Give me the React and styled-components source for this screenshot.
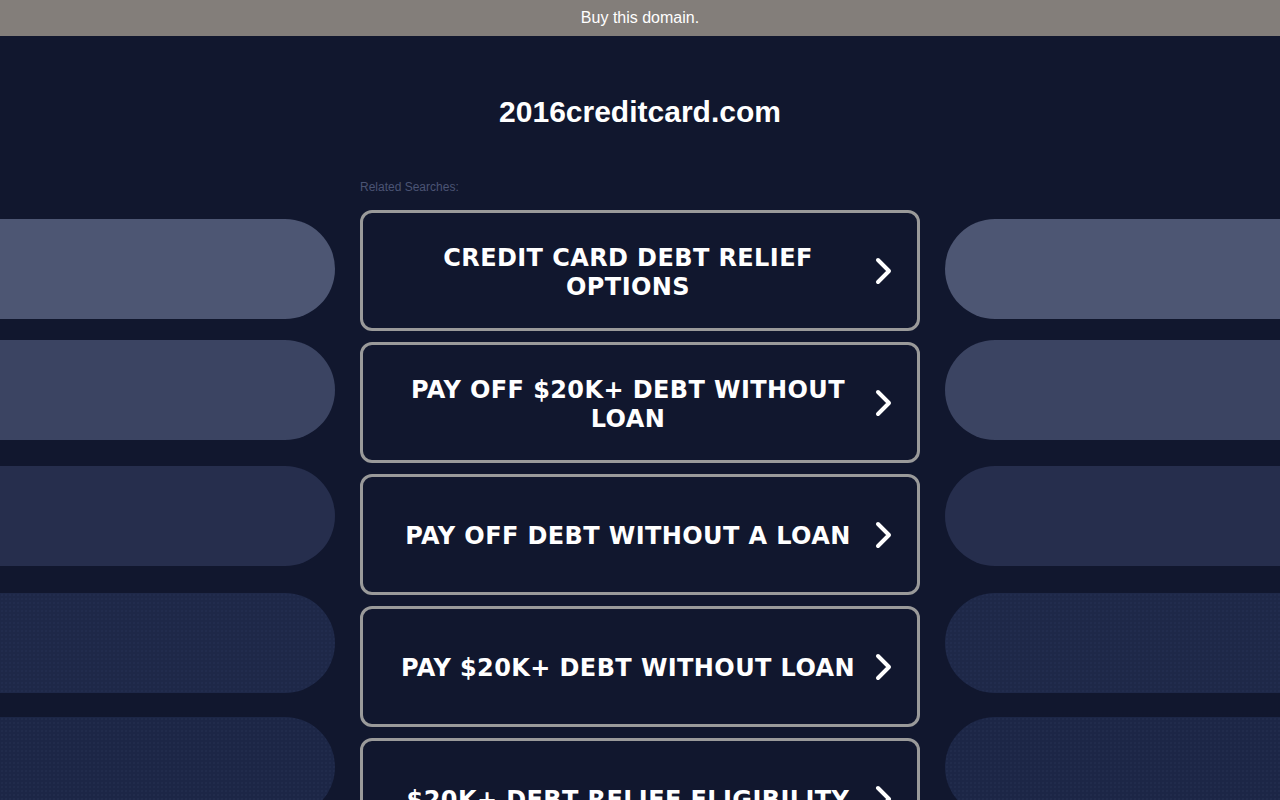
import React from 'react';
import styled, { createGlobalStyle } from 'styled-components';

const GlobalStyle = createGlobalStyle`
  html, body {
    margin: 0;
    padding: 0;
    height: 100%;
    overflow: hidden;
    background: #11172e;
  }
  body {
    font-family: "Liberation Sans", Arial, sans-serif;
  }
`;

const Page = styled.div`
  min-height: 100vh;
  background: #11172e;
`;

const TopBar = styled.div`
  height: 36px;
  background: #837e7a;
  color: #ffffff;
  font-size: 16px;
  display: flex;
  align-items: center;
  justify-content: center;
`;

const Layout = styled.div`
  display: grid;
  grid-template-columns: 1fr 560px 1fr;
  column-gap: 25px;
`;

const SideColumn = styled.div`
  padding-top: 183px;
  display: flex;
  flex-direction: column;
`;

const Pill = styled.div`
  height: 100px;
  margin-top: ${(p) => p.$gap}px;
  background-color: ${(p) => p.$color};
  border-radius: ${(p) => (p.$side === 'left' ? '0 50px 50px 0' : '50px 0 0 50px')};
  background-image: ${(p) =>
    p.$dots ? 'radial-gradient(rgba(50, 62, 100, 0.3) 0.6px, transparent 0.9px)' : 'none'};
  background-size: 4px 4px;
`;

const Center = styled.main`
  display: flex;
  flex-direction: column;
`;

const Title = styled.h1`
  margin: 60px 0 0;
  font-size: 30px;
  line-height: 32px;
  font-weight: bold;
  color: #ffffff;
  text-align: center;
`;

const Related = styled.div`
  margin-top: 52px;
  font-size: 12px;
  line-height: 14px;
  color: #4b5474;
`;

const List = styled.div`
  margin-top: 16px;
  display: flex;
  flex-direction: column;
  gap: 11px;
`;

const SearchLink = styled.a`
  box-sizing: border-box;
  height: 121px;
  border: 3px solid #9a9a9a;
  border-radius: 12px;
  display: flex;
  align-items: center;
  padding: 0 23px 0 20px;
  text-decoration: none;
  color: #ffffff;
  cursor: pointer;
`;

const LinkText = styled.span`
  flex: 1;
  text-align: center;
  font-family: "DejaVu Sans", Verdana, sans-serif;
  font-weight: bold;
  font-size: 24px;
  line-height: 29px;
  letter-spacing: 0.4px;
  text-transform: uppercase;
  padding-top: 4px;
`;

const Chevron = () => (
  <svg width="21" height="30" viewBox="0 0 21 30" aria-hidden="true">
    <polyline
      points="5,4 16,15 5,26"
      fill="none"
      stroke="#ffffff"
      strokeWidth="4"
      strokeLinecap="round"
      strokeLinejoin="round"
    />
  </svg>
);

const pills = [
  { color: '#4d5673', gap: 0 },
  { color: '#3b4462', gap: 21 },
  { color: '#262e4d', gap: 26 },
  { color: '#1e2848', gap: 27, dots: true },
  { color: '#1c2646', gap: 24, dots: true },
];

const searches = [
  'Credit Card Debt Relief Options',
  'Pay Off $20K+ Debt Without Loan',
  'Pay Off Debt Without A Loan',
  'Pay $20K+ Debt Without Loan',
  '$20K+ Debt Relief Eligibility',
];

const Side = ({ side }) => (
  <SideColumn>
    {pills.map((p, i) => (
      <Pill key={i} $side={side} $color={p.color} $gap={p.gap} $dots={p.dots} />
    ))}
  </SideColumn>
);

export default function App() {
  return (
    <Page>
      <GlobalStyle />
      <TopBar>Buy this domain.</TopBar>
      <Layout>
        <Side side="left" />
        <Center>
          <Title>2016creditcard.com</Title>
          <Related>Related Searches:</Related>
          <List>
            {searches.map((s) => (
              <SearchLink key={s}>
                <LinkText>{s}</LinkText>
                <Chevron />
              </SearchLink>
            ))}
          </List>
        </Center>
        <Side side="right" />
      </Layout>
    </Page>
  );
}
